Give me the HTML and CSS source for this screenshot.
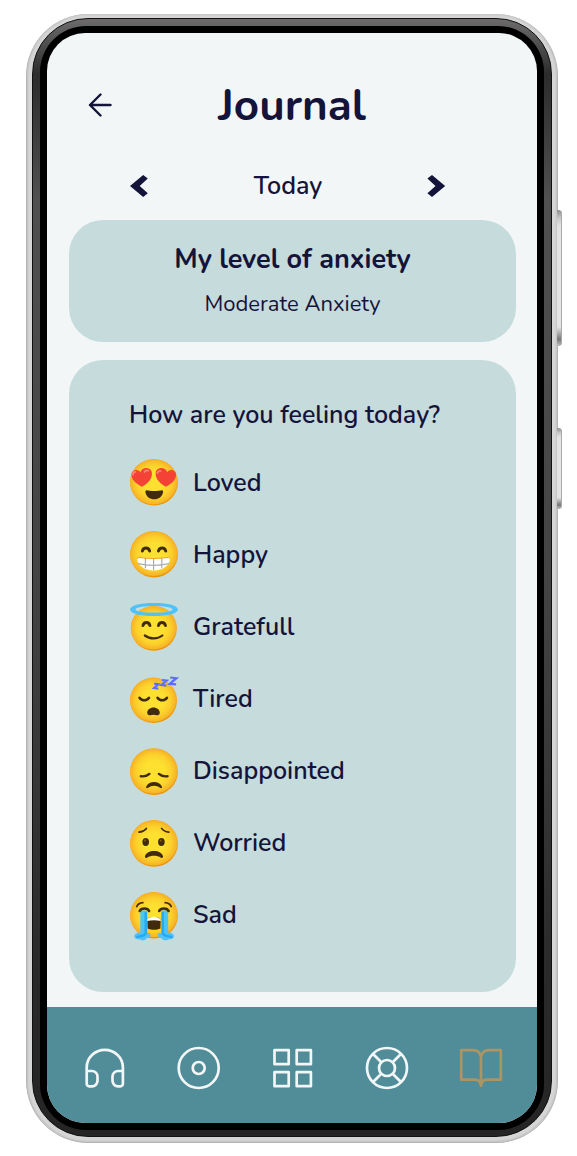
FILE: index.html
```html
<!DOCTYPE html>
<html lang="en">
<head>
<meta charset="utf-8">
<meta name="viewport" content="width=device-width, initial-scale=1">
<title>Journal</title>
<link rel="stylesheet" href="styles.css">
</head>
<body>
<svg class="defs" aria-hidden="true">
  <defs>
    <radialGradient id="skin" cx="0.5" cy="0.5" r="0.5">
      <stop offset="0.45" stop-color="#fde030"/>
      <stop offset="0.75" stop-color="#fbd02c"/>
      <stop offset="1" stop-color="#f6b126"/>
    </radialGradient>
    <linearGradient id="edge" x1="0.3" y1="0" x2="0.7" y2="1">
      <stop offset="0.6" stop-color="#f3ad2b"/>
      <stop offset="1" stop-color="#eb8f00"/>
    </linearGradient>
  </defs>
</svg>
<div class="phone">
  <span class="side-key volume"></span>
  <span class="side-key power"></span>
  <div class="bezel">
    <div class="rim">
      <div class="screen">
        <header class="header">
          <button class="icon-button" type="button" aria-label="Back">
            <svg width="24" height="24" viewBox="0 0 24 24" fill="none" stroke="currentColor" stroke-width="2.4" stroke-linecap="round" stroke-linejoin="round"><path d="M22.500 12H2M12.500 1.500 2 12 12.500 22.500"/></svg>
          </button>
          <h1 class="title">Journal</h1>
        </header>
        <div class="day">
          <button class="icon-button" type="button" aria-label="Previous day">
            <svg width="20" height="22" viewBox="0 0 20 22" fill="currentColor"><path d="M13.200 0 17.800 3.600 9.700 11 17.800 18.300 13.200 22 0 11Z"/></svg>
          </button>
          <span class="day-name">Today</span>
          <button class="icon-button" type="button" aria-label="Next day">
            <svg width="20" height="22" viewBox="0 0 20 22" fill="currentColor"><path d="M6 0 1.400 3.600 9.500 11 1.400 18.300 6 22 19.200 11Z"/></svg>
          </button>
        </div>
        <main class="content">
          <section class="card level">
            <h2 class="level-title">My level of anxiety</h2>
            <p class="level-value">Moderate Anxiety</p>
          </section>
          <section class="card feelings">
            <h2 class="question">How are you feeling today?</h2>
            <ul class="moods">
              <li><button class="mood" type="button">
                <svg class="face" viewBox="0 0 48 48" aria-hidden="true">
                  <ellipse cx="24" cy="23.300" rx="24" ry="23.300" fill="url(#edge)"/><ellipse cx="23.700" cy="22.800" rx="23.500" ry="22.600" fill="url(#skin)"/>
                  <path d="M12 27.800C7 25.200 1.500 21.500 1.500 15.800c0-4.900 6.400-6.400 8.900-2.500 1.300-5 9.700-6 11.300-.5 1.300 5.700-2.600 11-9.700 15Z" fill="#f44336"/>
                  <path d="M35.800 27.800c5-2.600 10.300-6.300 10.300-12 0-4.900-6.400-6.400-8.800-2.500-1.300-5-9.700-6-11.400-.5-1.300 5.700 2.800 11 9.900 15Z" fill="#f44336"/>
                  <path d="M3 15.500c0-2 1.200-3 2.400-2.600M14.500 13c1-1.600 2.600-1.800 3.700-1.200M27.500 14c.3-1.600 1.800-2.500 3-2" stroke="#ff847a" stroke-width="1.800" stroke-linecap="round" fill="none"/>
                  <path d="M16.500 31.200C20 32.300 28.500 32.300 32 31.200c1 .2 1.300 1.200 1 2.300-.8 4-4.400 6.800-8.800 6.800s-8-2.800-8.700-6.800c-.3-1.100 0-2.100 1-2.300Z" fill="#422b0d"/>
                </svg><span>Loved</span></button></li>
              <li><button class="mood" type="button">
                <svg class="face" viewBox="0 0 48 48" aria-hidden="true">
                  <ellipse cx="24" cy="23.200" rx="24" ry="23.200" fill="url(#edge)"/><ellipse cx="23.700" cy="22.600" rx="23.500" ry="22.400" fill="url(#skin)"/>
                  <path d="M12.400 20c1-4 6.200-4 7.200 0M28.500 20c1-4 6.200-4 7.200 0" stroke="#422b0d" stroke-width="3" stroke-linecap="round" fill="none"/>
                  <path d="M8.600 26.300c9.500 1.500 20.400 1.500 29.800 0 1.200-.1 1.700.8 1.500 2.200-1 6.400-7.400 10.900-16.300 10.900S8.200 34.900 7.200 28.500c-.2-1.400.3-2.300 1.400-2.200Z" fill="#fff"/>
                  <path d="M8 32.700c10 2.200 21 2.200 31 0M15.400 27v10.300M23.600 27.500v11.700M31.800 27v10.300" stroke="#a9adaf" stroke-width="1.200" fill="none"/>
                  <path d="M7.500 28c0-1.300.5-1.700 1.300-1.600 9.500 1.500 20 1.500 29.400 0 .9-.1 1.400.4 1.300 1.600" stroke="#eb8f00" stroke-width=".8" fill="none"/>
                </svg><span>Happy</span></button></li>
              <li><button class="mood" type="button">
                <svg class="face" viewBox="0 0 48 48" aria-hidden="true">
                  <ellipse cx="23.800" cy="25.300" rx="23.100" ry="22.400" fill="url(#edge)"/><ellipse cx="23.500" cy="24.800" rx="22.600" ry="21.700" fill="url(#skin)"/>
                  <path d="M24 0C9.500 0 0 2.700 0 6.500S9.500 13 24 13s24-2.700 24-6.500S38.500 0 24 0Zm0 3c10.500 0 18.500 1.500 18.500 3.400S34.500 9.600 24 9.600 5.500 8.300 5.500 6.400 13.500 3 24 3Z" fill="#4fc3f7" fill-rule="evenodd"/>
                  <path d="M13 22.500c1-4 5.900-4 6.900 0M28.500 22.500c1-4 5.900-4 6.900 0" stroke="#422b0d" stroke-width="3" stroke-linecap="round" fill="none"/>
                  <path d="M14.800 32.500c5 3.800 13 3.800 17.600 0" stroke="#422b0d" stroke-width="2.200" stroke-linecap="round" fill="none"/>
                </svg><span>Gratefull</span></button></li>
              <li><button class="mood" type="button">
                <svg class="face" viewBox="0 0 48 48" aria-hidden="true">
                  <ellipse cx="23.500" cy="25.300" rx="23.500" ry="22.800" fill="url(#edge)"/><ellipse cx="23.200" cy="24.800" rx="23" ry="22" fill="url(#skin)"/>
                  <path d="m24.200 8.700 4.200.6-4.300 3.700 4.200.6M32 5l4.800.6L31.500 10l4.900.6M40.200 2.500l6.200.7-6.700 5.600 6.400.6" stroke="#5c6cff" stroke-width="2.200" fill="none"/>
                  <path d="M9.500 22.700c2.500 3.500 7 3.500 9.500 0M27.500 22.700c2.500 3.500 7 3.500 9.500 0" stroke="#422b0d" stroke-width="2.500" stroke-linecap="round" fill="none"/>
                  <path d="M23.500 32.400c3.500 0 6.300 2.400 6.300 5.200 0 2.200-1.500 3.100-3.100 2.600-2.200-.7-4.200-.7-6.400 0-1.600.5-3.100-.4-3.100-2.600 0-2.800 2.800-5.200 6.300-5.200Z" fill="#422b0d"/>
                </svg><span>Tired</span></button></li>
              <li><button class="mood" type="button">
                <svg class="face" viewBox="0 0 48 48" aria-hidden="true">
                  <ellipse cx="24" cy="24.600" rx="24" ry="23.300" fill="url(#edge)"/><ellipse cx="23.700" cy="24.100" rx="23.500" ry="22.500" fill="url(#skin)"/>
                  <path d="M10.800 29.200c3.500.5 6.500-.3 8.600-2.300M37.500 29.200c-3.500.5-6.500-.3-8.600-2.300" stroke="#422b0d" stroke-width="2.400" stroke-linecap="round" fill="none"/>
                  <path d="M16.300 39.500C19 33.600 29 33.600 31.900 39.500c.6 1.500-.6 2.200-1.800 1.300-3.600-2.800-8.400-2.800-12 0-1.200.9-2.400.2-1.800-1.300Z" fill="#422b0d"/>
                </svg><span>Disappointed</span></button></li>
              <li><button class="mood" type="button">
                <svg class="face" viewBox="0 0 48 48" aria-hidden="true">
                  <ellipse cx="24" cy="24.400" rx="24" ry="23.300" fill="url(#edge)"/><ellipse cx="23.700" cy="23.900" rx="23.500" ry="22.500" fill="url(#skin)"/>
                  <path d="M9 13.200c3-.3 5.800-1.700 7.400-3.800M38.800 13.200c-3-.3-5.800-1.700-7.200-3.800" stroke="#422b0d" stroke-width="1.700" stroke-linecap="round" fill="none"/>
                  <ellipse cx="15.700" cy="23" rx="3.300" ry="4" fill="#422b0d"/><ellipse cx="31.400" cy="23" rx="3.300" ry="4" fill="#422b0d"/>
                  <circle cx="15" cy="21.500" r=".9" fill="#896024"/><circle cx="30.700" cy="21.500" r=".9" fill="#896024"/>
                  <path d="M24 32c4.500 0 7.700 2 8.900 4.800.6 1.600-.5 2.700-1.900 1.900-4.200-2.600-9.800-2.600-14 0-1.400.8-2.500-.3-1.900-1.900C16.300 34 19.500 32 24 32Z" fill="#422b0d"/>
                </svg><span>Worried</span></button></li>
              <li><button class="mood" type="button">
                <svg class="face" viewBox="0 0 48 48" aria-hidden="true">
                  <ellipse cx="24" cy="24.300" rx="24" ry="23.300" fill="url(#edge)"/><ellipse cx="23.700" cy="23.800" rx="23.500" ry="22.500" fill="url(#skin)"/>
                  <path d="M6.800 15.500c1-2.200 3.300-3.600 6-3.800M41.200 15.500c-1-2.200-3.300-3.600-6-3.800" stroke="#422b0d" stroke-width="1.800" stroke-linecap="round" fill="none"/>
                  <path d="M17.200 28c3.500-2.600 10-2.600 13.500 0l-.3 9.400c-3.500 1.800-9.300 1.800-12.900 0Z" fill="#422b0d"/>
                  <path d="M17 28.300c3.300-3.400 10.500-3.400 13.700 0v1.600c-4-.9-9.500-.9-13.700 0Z" fill="#fff"/>
                  <path d="M10.300 20c2.300-1 5-1 7 0v22h2.500c1.700 3.500-.7 5-3.200 5.200-1.500 2.700-5.200 2.700-7 1-3.300.2-6.300-1.300-5-4.300.9-1.900 3.500-2.500 5.700-2.100Z" fill="#4fc3f7"/>
                  <path d="M38.200 20c-2.300-1-5-1-7 0v22h-2.700c-1.700 3.500.7 5 3.200 5.200 1.500 2.700 5.200 2.700 7 1 3.300.2 6.300-1.300 5-4.300-.9-1.900-3.300-2.500-5.500-2.100Z" fill="#4fc3f7"/>
                  <path d="M15.700 22v20.500c-2 3-5.500 2.500-8.500 3.300M32.800 22v20.500c2 3 5.500 2.500 8.500 3.300" stroke="#29a9f4" stroke-width="2.400" stroke-linecap="round" fill="none"/>
                  <path d="M9.700 20c1.500-3.400 8-3.400 9.400 0M29.200 20c1.500-3.400 8-3.400 9.400 0" stroke="#422b0d" stroke-width="2.600" stroke-linecap="round" fill="none"/>
                </svg><span>Sad</span></button></li>
            </ul>
          </section>
        </main>
        <nav class="tabs" aria-label="Main">
          <a class="tab" href="#listen" aria-label="Listen"><svg class="tab-icon" viewBox="0 0 44 44"><path d="M3.700 27V21.500a18.100 17.600 0 0 1 36.200 0V27M3.700 25H9a5.500 5.500 0 0 1 5.500 5.500v4.300A5.500 5.500 0 0 1 9 40.300H6.200a2.500 2.500 0 0 1-2.500-2.500ZM39.900 25H35a5.500 5.500 0 0 0-5.500 5.500v4.300a5.500 5.500 0 0 0 5.500 5.500h2.400a2.500 2.500 0 0 0 2.500-2.500Z"/></svg></a>
          <a class="tab" href="#disc" aria-label="Play"><svg class="tab-icon" viewBox="0 0 44 44"><circle cx="21.700" cy="22" r="20"/><circle cx="21.700" cy="22" r="6"/></svg></a>
          <a class="tab" href="#menu" aria-label="Menu"><svg class="tab-icon" viewBox="0 0 44 44"><path d="M3.500 4.200h14.200v14H3.500ZM25.700 4.200h14.200v14H25.700ZM3.500 26.200h14.200v14H3.500ZM25.700 26.200h14.200v14H25.700Z"/></svg></a>
          <a class="tab" href="#support" aria-label="Support"><svg class="tab-icon" viewBox="0 0 44 44"><circle cx="22" cy="22" r="20"/><circle cx="22" cy="22" r="8"/><path d="m7.800 7.800 8.500 8.500m11.400 11.400 8.500 8.500m0-28.400-8.500 8.500M16.300 27.700l-8.500 8.500"/></svg></a>
          <a class="tab current" href="#journal" aria-label="Journal" aria-current="page"><svg class="tab-icon" viewBox="0 0 44 44"><path d="M22 11.500C21.500 6.700 18.500 4.200 14 4.200H2.200v29.500H16c3.500 0 5.500 2 6 6 .5-4 2.500-6 6-6h13.800V4.200H30c-4.500 0-7.500 2.500-8 7.300v28.200"/></svg></a>
        </nav>
      </div>
    </div>
  </div>
</div>
</body>
</html>
```

FILE: styles.css
```css
* {
  box-sizing: border-box;
}

body {
  margin: 0;
  background: #fff;
  color: #14143a;
  font-family: Nunito, Lato, "Open Sans", sans-serif;
  font-weight: 700;
}

h1, h2, p, ul {
  margin: 0;
  padding: 0;
}

button {
  padding: 0;
  border: 0;
  background: none;
  color: inherit;
  font: inherit;
  cursor: pointer;
}

svg {
  display: block;
}

.defs {
  position: absolute;
  width: 0;
  height: 0;
}

.phone {
  position: relative;
  margin: 14px 19px 13px 26px;
  padding: 4px 5px 5px;
  border: 1px solid #b4b4b4;
  border-top: 0;
  border-radius: 62px;
  background: #d6d6d6;
  box-shadow: inset 0 0 2px 1px #c2c2c2;
}

.side-key {
  position: absolute;
  right: -5px;
  width: 5px;
  border-radius: 0 4px 4px 0;
  background: linear-gradient(#8c8c8c, #c8c8c8 6%, #e4e4e4 12%, #e4e4e4 86%, #777 95%, #c0c0c0);
  box-shadow: inset -1px 0 #aaa;
}

.volume {
  top: 196px;
  height: 136px;
}

.power {
  top: 414px;
  height: 81px;
}

.bezel {
  padding: 7px 7px 6px;
  border: 1px solid #111;
  border-radius: 56px;
  background: linear-gradient(#6d6b6b, #2c2c2c 5%, #505050 16%, #444 50%, #2a2a2a 85%, #252525);
}

.rim {
  padding: 7px;
  border-radius: 46px;
  background: #000;
}

.screen {
  overflow: hidden;
  border-radius: 38px;
  background: #f2f6f7;
}

.header {
  display: grid;
  grid-template-columns: 24px 1fr 24px;
  align-items: center;
  padding: 40px 41px 0;
}

.title {
  padding-top: 3px;
  font-size: 44px;
  line-height: 60px;
  text-align: center;
}

.day {
  display: flex;
  align-items: center;
  justify-content: space-between;
  padding: 33px 91px 17px 83px;
}

.day-name {
  font-size: 25px;
  font-weight: 650;
  line-height: 34px;
}

.content {
  display: grid;
  gap: 18px;
  padding: 0 21px 15px 22px;
}

.card {
  border-radius: 34px;
  background: #c6dbdc;
}

.level {
  padding: 21px 20px 23px;
  text-align: center;
}

.level-title {
  font-size: 27px;
  line-height: 38px;
}

.level-value {
  padding-top: 10px;
  font-size: 22px;
  font-weight: 400;
  line-height: 30px;
}

.feelings {
  padding: 38px 60px 41px;
}

.question {
  padding-bottom: 15px;
  font-size: 25px;
  font-weight: 650;
  line-height: 34px;
  white-space: nowrap;
}

.moods {
  display: grid;
  list-style: none;
}

.mood {
  display: flex;
  align-items: center;
  gap: 15px;
  width: 100%;
  height: 72px;
  padding-left: 1px;
  font-size: 25px;
  font-weight: 650;
  line-height: 34px;
}

.face {
  width: 48px;
  height: 48px;
  overflow: visible;
}

.tabs {
  display: grid;
  grid-template-columns: repeat(5, 1fr);
  padding: 39px 9px 33px 11px;
  background: #508d98;
}

.tab {
  display: grid;
  justify-items: center;
  color: #f2f6f7;
}

.current {
  color: #ab9565;
}

.tab-icon {
  width: 44px;
  height: 44px;
  fill: none;
  stroke: currentColor;
  stroke-width: 2.7;
  stroke-linejoin: round;
}
```
